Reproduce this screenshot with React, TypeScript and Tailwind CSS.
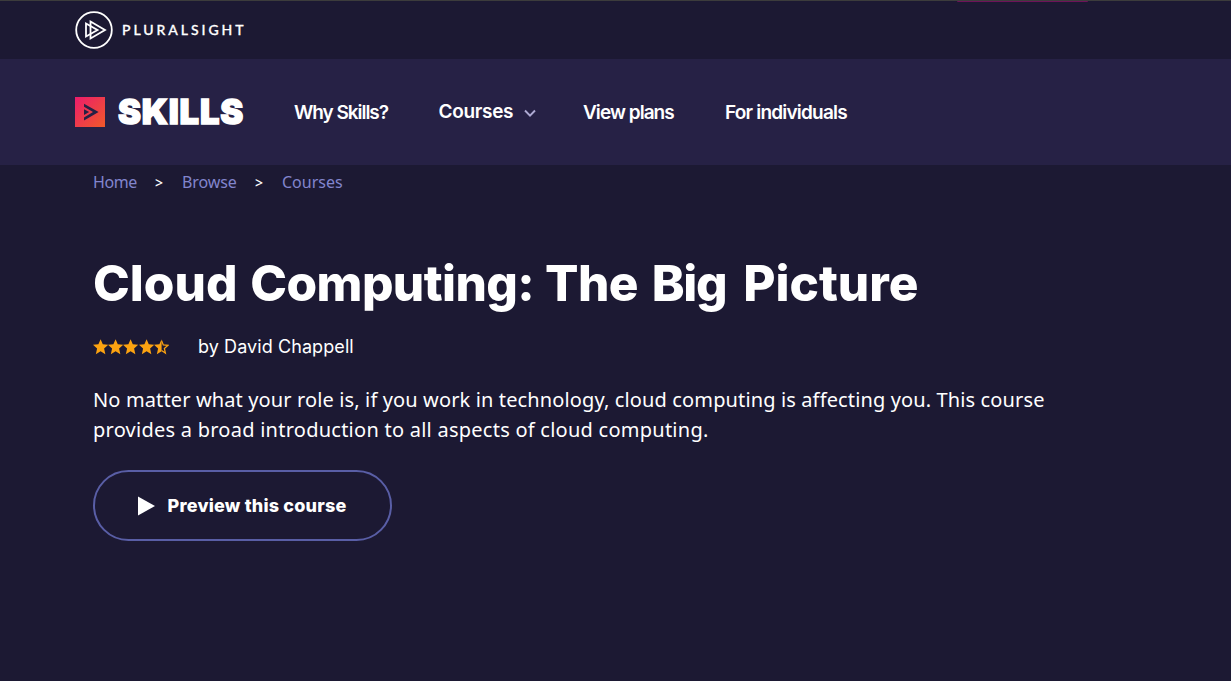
import React from "react";

const STAR = "M8 0.2 L10.3 5.2 L16 5.8 L11.7 9.6 L13 15.2 L8 12.3 L3 15.2 L4.3 9.6 L0 5.8 L5.7 5.2 Z";

function Star({ half = false }: { half?: boolean }) {
  return (
    <svg width="15.2" height="16" viewBox="0 0 16 16" preserveAspectRatio="none" className="shrink-0">
      {half ? (
        <>
          <path d="M8 0.2 L8 12.3 L3 15.2 L4.3 9.6 L0 5.8 L5.7 5.2 Z" fill="#fca311" />
          <path d="M8 1.8 L9.8 6 L14.5 6.4 L10.9 9.4 L12 14 L8 11.5" fill="none" stroke="#fca311" strokeWidth="1.3" />
        </>
      ) : (
        <path d={STAR} fill="#fca311" />
      )}
    </svg>
  );
}

function TopBar() {
  return (
    <div className="h-[59px] border-t border-[#3c3c3c]">
      <div className="ml-[957px] h-px w-[131px] rounded-b bg-[#6d1259]" />
      <div className="flex h-[56px] items-center pl-[75px]">
        <svg width="38" height="38" viewBox="0 0 38 38" fill="none" stroke="#fff" className="shrink-0">
          <circle cx="19" cy="19" r="17.8" strokeWidth="1.8" />
          <path d="M15.5 10.5 L30 19 L15.5 27.5 Z" strokeWidth="1.8" />
          <path d="M11 12.5 L22.5 19 L11 25.5 Z" strokeWidth="1.8" />
        </svg>
        <span className="ml-[9px] whitespace-nowrap font-['Lato'] text-[14px] font-medium leading-5 tracking-[2.95px] text-white [-webkit-text-stroke:0.3px_white]">PLURALSIGHT</span>
      </div>
    </div>
  );
}

function Nav() {
  return (
    <nav className="flex h-[106px] items-center bg-[#262145] pl-[75px] font-['Inter'] text-[19px] font-semibold leading-6 text-white">
      <svg width="30" height="30" viewBox="0 0 30 30" className="shrink-0">
        <defs>
          <linearGradient id="brand" x1="0" y1="0" x2="1" y2="1">
            <stop offset="0" stopColor="#ec1c6c" />
            <stop offset="1" stopColor="#f15a29" />
          </linearGradient>
        </defs>
        <rect width="30" height="30" fill="url(#brand)" />
        <path d="M9 6.7 L23.6 15 L9 23.5 V20.4 L18 15 L9 9.8 Z" fill="#262145" />
        <path d="M9 12.2 L14.2 15 L9 18 Z" fill="#262145" />
      </svg>
      <span className="ml-[13px] w-[176px] whitespace-nowrap text-[34.5px] font-black leading-10 tracking-[0.8px] [-webkit-text-stroke:1.4px_white]">SKILLS</span>
      <span className="w-[144px] whitespace-nowrap pt-px tracking-[-1.05px]">Why Skills?</span>
      <span className="flex w-[145px] items-center whitespace-nowrap pl-[0.5px] tracking-[-0.3px]">
        Courses
        <svg width="14" height="14" viewBox="0 0 14 14" className="ml-[10px] mt-[2px]" fill="none" stroke="#aeaad3" strokeWidth="1.9">
          <path d="M2 4.5 L7 9.7 L12 4.5" />
        </svg>
      </span>
      <span className="w-[142px] whitespace-nowrap pt-px tracking-[-0.95px]">View plans</span>
      <span className="whitespace-nowrap pt-px tracking-[-0.8px]">For individuals</span>
    </nav>
  );
}

export default function App() {
  return (
    <div className="h-[681px] w-full overflow-hidden bg-[#1c1933]">
      <TopBar />
      <Nav />
      <main className="pl-[93px] font-['Inter'] text-white">
        <div className="flex h-[34px] items-center whitespace-nowrap font-['Noto_Sans'] text-[16px] leading-6 text-[#8285cd]">
          <span className="w-[62px] tracking-[-0.4px]">Home</span>
          <span className="w-[27px] pt-[2px] text-[14px] font-medium text-white">&gt;</span>
          <span className="w-[73px] tracking-[-0.1px]">Browse</span>
          <span className="w-[27px] pt-[2px] text-[14px] font-medium text-white">&gt;</span>
          <span>Courses</span>
        </div>
        <h1 className="mt-[52px] whitespace-nowrap text-[49.5px] font-extrabold leading-[64px]">
          Cloud <span className="ml-[2px] tracking-[-0.6px]">Computing:</span>{" "}
          <span className="tracking-[-0.6px]">The</span>{" "}
          <span className="ml-[3px] tracking-[-1.3px]">Big</span>{" "}
          <span className="ml-[6px]">Picture</span>
        </h1>
        <div className="mt-[20px] flex h-6 items-center">
          <div className="flex w-[105px]">
            <Star />
            <Star />
            <Star />
            <Star />
            <Star half />
          </div>
          <span className="whitespace-nowrap text-[18px] leading-6 tracking-[0.08px]">by David Chappell</span>
        </div>
        <p className="mt-[26px] whitespace-nowrap font-['Noto_Sans'] text-[20px] leading-[30px]">
          <span className="block tracking-[0.13px]">No matter what your role is, if you work in technology, cloud computing is affecting you. This course</span>
          <span className="block tracking-[0.25px]">provides a broad introduction to all aspects of cloud computing.</span>
        </p>
        <button className="mt-[25px] flex h-[71px] w-[299px] items-center rounded-full border-2 border-[#595ea6] pl-[43px]">
          <svg width="17" height="20" viewBox="0 0 17 20" className="shrink-0">
            <path d="M0 0.5 L17 10 L0 19.5 Z" fill="#fff" />
          </svg>
          <span className="ml-[12.5px] whitespace-nowrap text-[18px] font-extrabold leading-6 tracking-[0.2px]">Preview this course</span>
        </button>
      </main>
    </div>
  );
}
